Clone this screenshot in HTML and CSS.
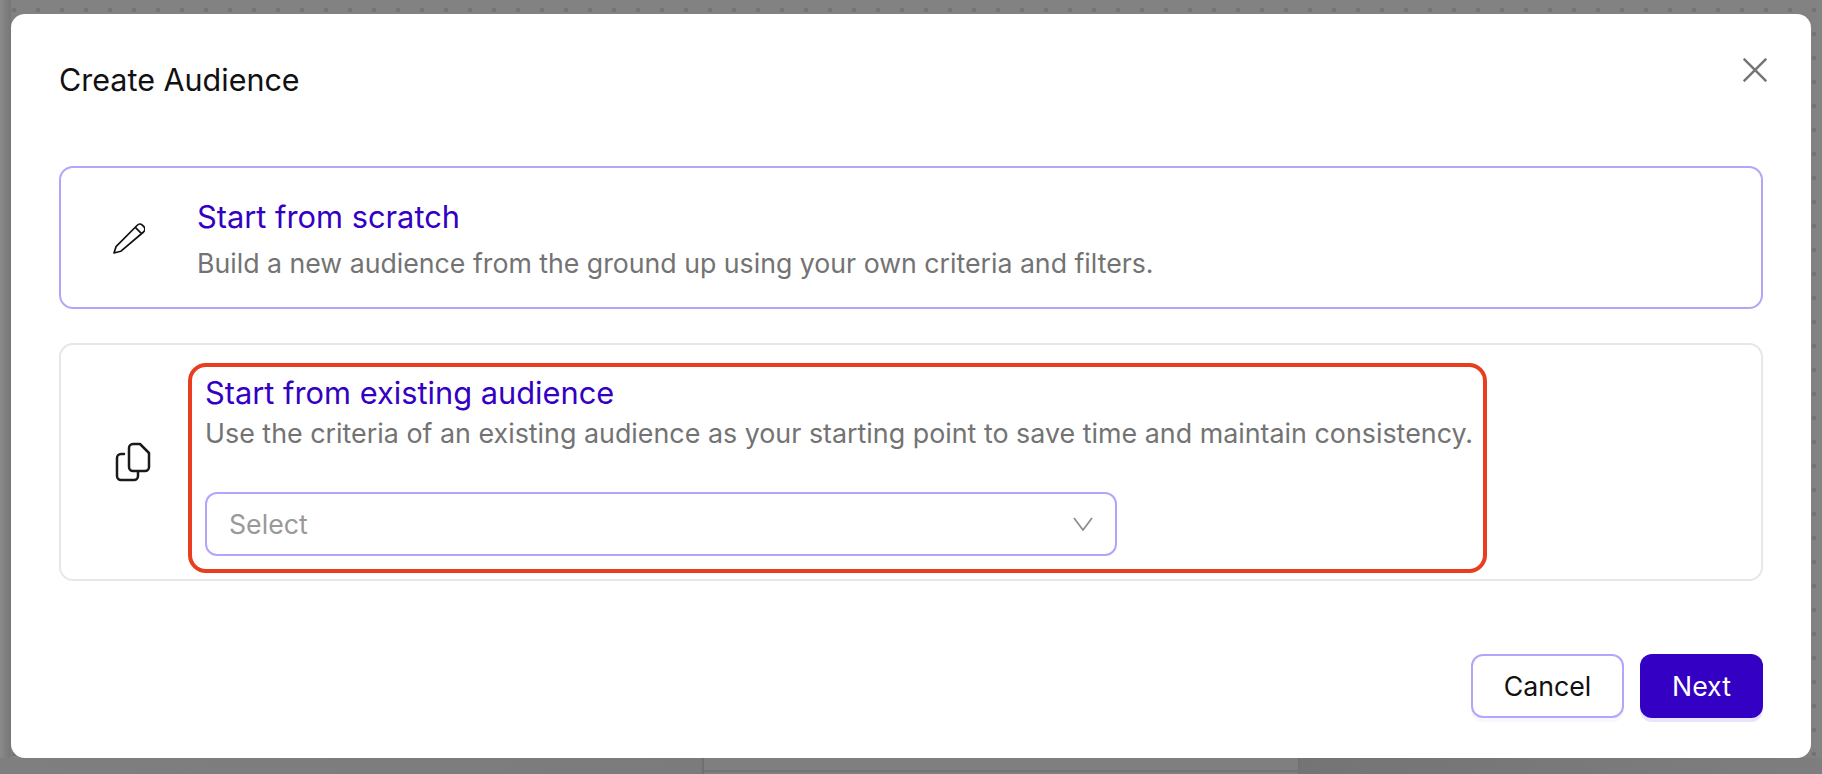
FILE: index.html
```html
<!DOCTYPE html>
<html lang="en">
<head>
<meta charset="utf-8">
<title>Create Audience</title>
<link rel="stylesheet" href="styles.css">
</head>
<body>
<div class="backdrop">
  <div class="under-panel"><div class="under-center"></div></div>
  <section class="modal">
    <header class="modal-head">
      <h1 class="modal-title">Create Audience</h1>
      <button class="close" aria-label="Close">
        <svg viewBox="0 0 24 24" width="24" height="24"><path d="M.7.7l22.6 22.6M23.3.7L.7 23.3"/></svg>
      </button>
    </header>
    <div class="options">
      <div class="card card-active">
        <span class="card-icon">
          <svg viewBox="0 0 32 32" width="32" height="32"><path d="M1 31l2-6.300L24 3.500q2.800-2.800 5.300-.3l1.500 1.500q2.500 2.500-.3 5.300L7.700 29.300zM22.300 5.300l6 6"/></svg>
        </span>
        <div class="card-body">
          <h2 class="card-title">Start from scratch</h2>
          <p class="card-desc">Build a new audience from the ground up using your own criteria and filters.</p>
        </div>
      </div>
      <div class="card card-plain">
        <span class="card-icon card-icon-copy">
          <svg viewBox="0 0 36 40" width="36" height="40"><path d="M18 2h7l9 9v14a4 4 0 0 1-4 4H18a4 4 0 0 1-4-4V6a4 4 0 0 1 4-4zM9 12H6a4 4 0 0 0-4 4v18a4 4 0 0 0 4 4h13a4 4 0 0 0 4-4v-4"/></svg>
        </span>
        <div class="highlight">
          <h2 class="card-title">Start from existing audience</h2>
          <p class="card-desc">Use the criteria of an existing audience as your starting point to save time and maintain consistency.</p>
          <div class="select">
            <span>Select</span>
            <svg viewBox="0 0 20 14" width="20" height="14"><path d="M1 1l9 12 9-12"/></svg>
          </div>
        </div>
      </div>
    </div>
    <footer class="modal-foot">
      <button class="btn btn-ghost">Cancel</button>
      <button class="btn btn-primary">Next</button>
    </footer>
  </section>
</div>
</body>
</html>
```
FILE: styles.css
```css
* { box-sizing: border-box; }
html, body { margin: 0; height: 100%; }
body { font-family: Inter, "Noto Sans", sans-serif; overflow: hidden; }
.backdrop {
  position: relative;
  height: 774px;
  padding: 14px 11px 16px;
  background-color: #828282;
  background-image:
    linear-gradient(90deg, #8a8a8a, #767676),
    radial-gradient(circle, #737373 2px, transparent 2.5px);
  background-size: 11px 100%, 24px 24px;
  background-position: 0 0, 2px -2px;
  background-repeat: no-repeat, repeat;
}
.under-panel {
  position: absolute; left: 0; right: 0; top: 758px; bottom: 0;
  background: linear-gradient(90deg, #7f7f7f 0, #7b7b7b 700px, #747474 1300px, #7e7e7e 1822px);
}
.under-center {
  width: 597px;
  height: 100%;
  margin-left: 702px;
  background: #7f7f7f;
  border-left: 2px solid #6f6f6f;
  border-right: 1px solid #6f6f6f;
  position: relative;
}
.under-center::after {
  content: "";
  position: absolute; left: 0; right: 0; top: 12px;
  height: 2px;
  background: #747474;
}
.modal {
  position: relative;
  height: 744px;
  background: #fff;
  border-radius: 14px;
  padding: 0 49px;
  display: flex;
  flex-direction: column;
}
.modal-head { display: flex; justify-content: space-between; height: 152px; padding-top: 49px; }
.modal-title { margin: 0 0 0 -1px; font-size: 30.500px; line-height: 34px; font-weight: 400; color: #111; }
.close { border: 0; background: none; padding: 0; width: 24px; height: 24px; margin: -5px -5px 0 0; }
.close svg path { fill: none; stroke: #757575; stroke-width: 2.500; }
.options { display: flex; flex-direction: column; gap: 34px; margin: 0 -1px; }
.card { display: flex; align-items: center; border-radius: 14px; }
.card-active { height: 143px; border: 2px solid #b6a4fb; }
.card-plain { height: 238px; border: 2px solid #e7e7e7; }
.card-icon { width: 129px; padding-left: 52px; display: flex; flex: none; }
.card-icon svg path { fill: none; stroke: #111; stroke-width: 1.700; stroke-linejoin: round; stroke-linecap: round; }
.card-icon-copy svg path { stroke-width: 2.500; stroke: #1a1a1a; }
.card-body { display: flex; flex-direction: column; gap: 13px; margin-left: 7px; margin-top: 3px; }
.card-title { margin: 0; font-size: 30.800px; line-height: 34px; font-weight: 400; color: #3300c4; }
.card-desc { margin: 0; font-size: 26.700px; line-height: 32px; color: #737373; white-space: nowrap; }
.card-plain .card-icon { width: 127px; padding-left: 54px; }
.highlight {
  width: 1299px;
  height: 210px;
  margin-top: 12px;
  border: 4px solid #e93d1f;
  border-radius: 18px;
  padding: 9px 0 0 13px;
}
.highlight .card-desc { margin-top: 7px; font-size: 26.850px; }
.select {
  width: 912px; height: 64px; margin-top: 43px;
  display: flex; align-items: center; justify-content: space-between;
  padding: 0 22px;
  border: 2px solid #b6a4fb;
  border-radius: 12px;
  font-size: 26.700px; color: #999;
}
.select svg path { fill: none; stroke: #8f8f8f; stroke-width: 1.800; }
.modal-foot { margin-top: auto; display: flex; justify-content: flex-end; gap: 16px; padding-bottom: 40px; margin-right: -1px; }
.btn { height: 64px; border-radius: 12px; font: 400 26.700px Inter, "Noto Sans", sans-serif; }
.btn-ghost { width: 153px; background: #fff; border: 2px solid #b6a4fb; color: #111; box-shadow: 0 4px 0 #f8f6ff; }
.btn-primary { width: 123px; background: #3300c4; border: 0; color: #fff; box-shadow: 0 4px 0 #e9e4fb; }
```
